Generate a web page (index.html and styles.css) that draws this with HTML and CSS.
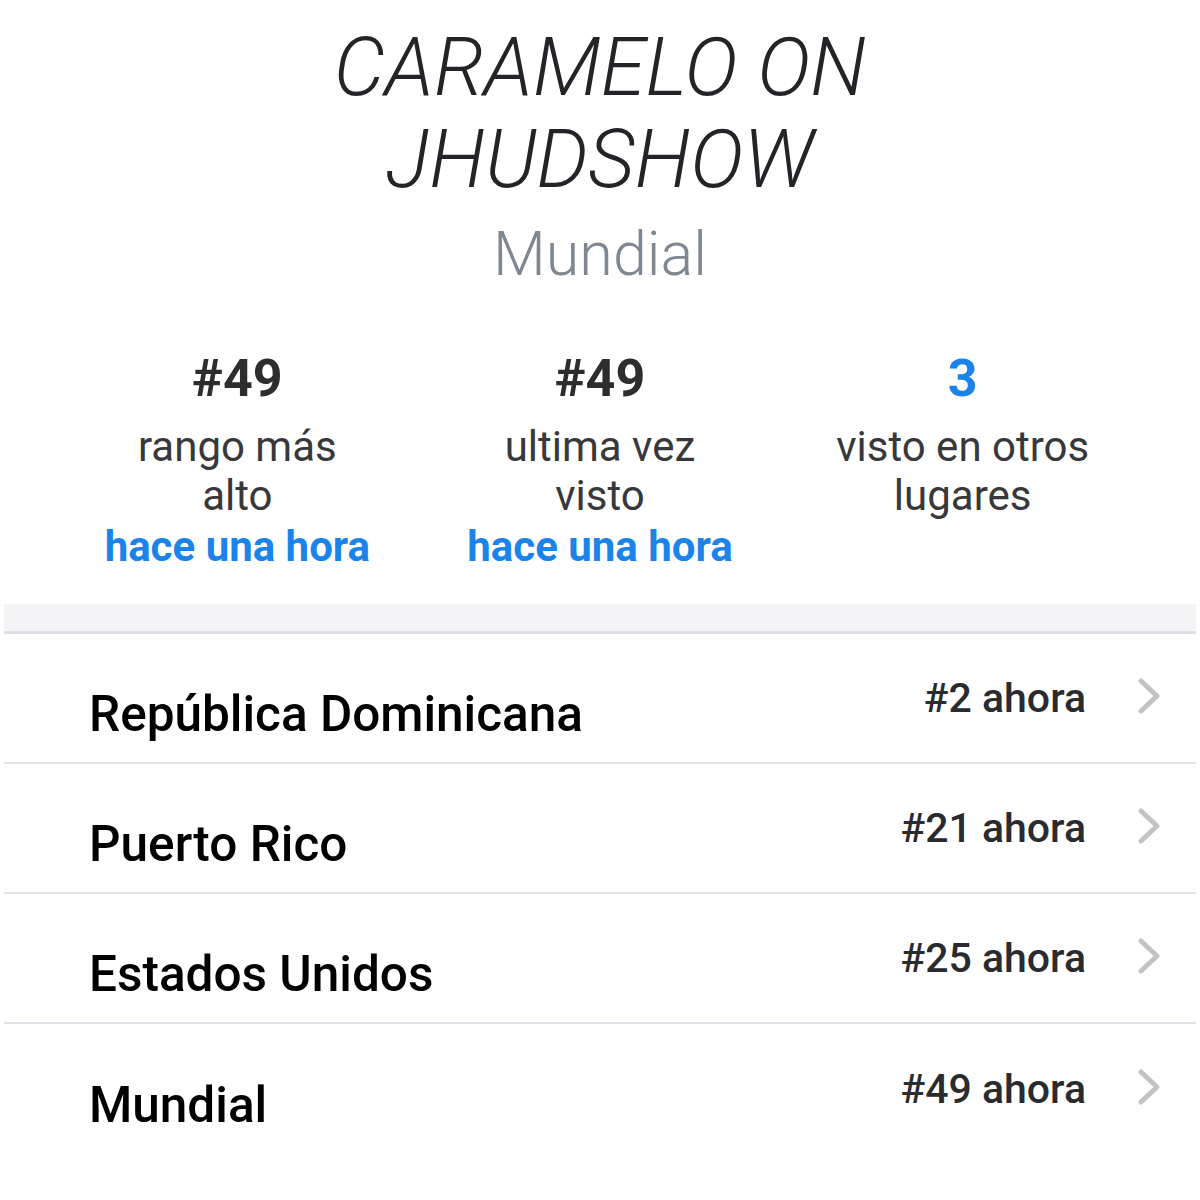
FILE: index.html
```html
<!DOCTYPE html>
<html lang="es">
<head>
    <meta charset="UTF-8">
    <meta name="viewport" content="width=device-width, initial-scale=1.0">
    <title>Caramelo on Jhudshow</title>
    <link rel="stylesheet" href="styles.css">
</head>
<body>

    <div class="page">
        <header class="header">
            <h1 class="title">CARAMELO ON<br>JHUDSHOW</h1>
            <div class="subtitle">Mundial</div>
        </header>

        <div class="stats">
            <div class="stat">
                <div class="stat-value">#49</div>
                <div class="stat-label">rango más<br>alto</div>
                <div class="stat-time">hace una hora</div>
            </div>
            <div class="stat">
                <div class="stat-value">#49</div>
                <div class="stat-label">ultima vez<br>visto</div>
                <div class="stat-time">hace una hora</div>
            </div>
            <div class="stat">
                <div class="stat-value blue">3</div>
                <div class="stat-label">visto en otros<br>lugares</div>
            </div>
        </div>

        <div class="band"></div>

        <ul class="places">
            <li class="place">
                <span class="place-name">República Dominicana</span>
                <span class="place-rank">#2 ahora</span>
                <svg class="chevron" viewBox="0 0 26 38"><polyline points="5,4 21,19 5,34"/></svg>
            </li>
            <li class="place">
                <span class="place-name">Puerto Rico</span>
                <span class="place-rank">#21 ahora</span>
                <svg class="chevron" viewBox="0 0 26 38"><polyline points="5,4 21,19 5,34"/></svg>
            </li>
            <li class="place">
                <span class="place-name">Estados Unidos</span>
                <span class="place-rank">#25 ahora</span>
                <svg class="chevron" viewBox="0 0 26 38"><polyline points="5,4 21,19 5,34"/></svg>
            </li>
            <li class="place">
                <span class="place-name">Mundial</span>
                <span class="place-rank">#49 ahora</span>
                <svg class="chevron" viewBox="0 0 26 38"><polyline points="5,4 21,19 5,34"/></svg>
            </li>
        </ul>
    </div>

</body>
</html>
```

FILE: styles.css
```css
/* Basic reset */
* {
    margin: 0;
    padding: 0;
    box-sizing: border-box;
}

body {
    font-family: 'Roboto', 'Liberation Sans', sans-serif;
    background: #fff;
    color: #2b2b2f;
}

.page {
    margin: 0 4px;
}

.header {
    text-align: center;
    padding-top: 22px;
}

.title {
    font-size: 81px;
    line-height: 92px;
    font-weight: 300;
    font-style: italic;
    color: #242428;
}

.subtitle {
    margin-top: 12px;
    font-size: 61px;
    line-height: 72px;
    font-weight: 300;
    color: #7f8791;
}

.stats {
    display: grid;
    grid-template-columns: repeat(3, 1fr);
    padding: 0 52px;
    margin-top: 61px;
    text-align: center;
}

.stat-value {
    font-size: 52px;
    line-height: 56px;
    font-weight: 700;
    color: #2d2d30;
    margin-bottom: 15px;
}

.stat-value.blue {
    color: #1b84ea;
}

.stat-label {
    font-size: 42px;
    line-height: 49px;
    color: #38383b;
}

.stat-time {
    font-size: 42px;
    line-height: 54px;
    font-weight: 700;
    color: #1b84ea;
}

.band {
    margin-top: 30px;
    height: 30px;
    background: #f4f4f6;
    border-bottom: 3px solid #dedee4;
}

.places {
    list-style: none;
}

.place {
    display: flex;
    align-items: center;
    height: 130px;
    padding: 0 34px 0 85px;
    border-bottom: 2px solid #e2e2e8;
}

.place:last-child {
    border-bottom: none;
}

.place-name {
    flex: 1;
    margin-top: 32px;
    font-size: 49.5px;
    line-height: 56px;
    font-weight: 500;
    color: #000;
}

.place-rank {
    font-size: 41px;
    line-height: 48px;
    font-weight: 500;
    color: #2a2b2e;
}

.chevron {
    width: 26px;
    height: 38px;
    margin-left: 50px;
    margin-top: -4px;
}

.chevron polyline {
    fill: none;
    stroke: #c3c3c3;
    stroke-width: 5;
    stroke-linecap: round;
    stroke-linejoin: round;
}
```
